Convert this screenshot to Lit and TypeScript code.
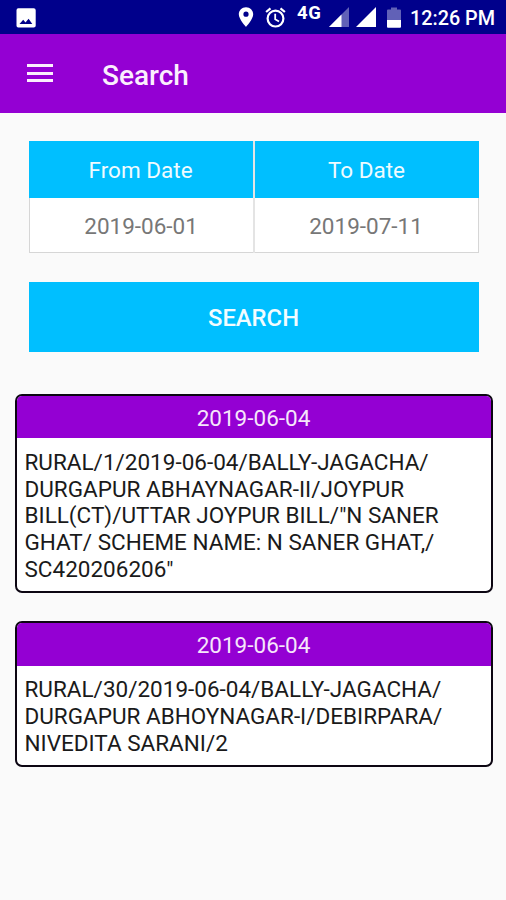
import { LitElement, html, css, svg } from "lit";
import { customElement, property } from "lit/decorators.js";

interface Scheme {
  date: string;
  lines: string[];
}

const schemes: Scheme[] = [
  {
    date: "2019-06-04",
    lines: [
      "RURAL/1/2019-06-04/BALLY-JAGACHA/",
      "DURGAPUR ABHAYNAGAR-II/JOYPUR",
      'BILL(CT)/UTTAR JOYPUR BILL/"N SANER',
      "GHAT/ SCHEME NAME: N SANER GHAT,/",
      'SC420206206"',
    ],
  },
  {
    date: "2019-06-04",
    lines: [
      "RURAL/30/2019-06-04/BALLY-JAGACHA/",
      "DURGAPUR ABHOYNAGAR-I/DEBIRPARA/",
      "NIVEDITA SARANI/2",
    ],
  },
];

@customElement("status-bar")
export class StatusBar extends LitElement {
  static styles = css`
    :host {
      display: flex;
      align-items: center;
      height: 34px;
      background: #00008b;
      color: #fff;
    }
    svg {
      display: block;
      flex: none;
      fill: #fff;
    }
    .picture { margin-left: 16px; margin-top: 1px; }
    .spacer { flex: 1; }
    .pin { margin-right: 11px; }
    .alarm { margin-right: 11px; }
    .network {
      font-size: 18.5px;
      font-weight: 700;
      letter-spacing: 0.6px;
      line-height: 20px;
      margin-bottom: 8px;
      width: 26px;
      margin-right: 6px;
      white-space: nowrap;
    }
    .signal { margin-right: 6.5px; }
    .battery { margin: 0 9px 0 5px; }
    .clock {
      width: 85px;
      margin-right: 11px;
      padding-top: 3px;
      font-size: 19.8px;
      font-weight: 500;
      white-space: nowrap;
    }
  `;

  render() {
    return html`
      <svg class="picture" width="20" height="20" viewBox="0 0 20 20">
        ${svg`<path fill-rule="evenodd" d="M2.3 .3H17.7Q19.7 .3 19.7 2.3V17.7Q19.7 19.5 17.7 19.5H2.3Q.5 19.5 .5 17.7V2.3Q.5 .3 2.3 .3ZM3.5 16H16.3L12.6 10.7L9.5 14.4L7.2 11.8Z"/>`}
      </svg>
      <span class="spacer"></span>
      <svg class="pin" width="16" height="20" viewBox="0 0 16 20">
        ${svg`<path fill-rule="evenodd" d="M8 .2C3.9 .2 .8 3.4 .8 7.3C.8 12.4 8 19.9 8 19.9S15.2 12.4 15.2 7.3C15.2 3.4 12.1 .2 8 .2ZM8 4.6A2.6 2.6 0 1 1 8 9.8A2.6 2.6 0 1 1 8 4.6Z"/>`}
      </svg>
      <svg class="alarm" width="21" height="21" viewBox="0 0 21 21">
        ${svg`<circle cx="10.5" cy="11.6" r="7.9" fill="none" stroke="#fff" stroke-width="2.2"/>
        <path d="M1.1 5L5.5 1.3M19.9 5L15.5 1.3" fill="none" stroke="#fff" stroke-width="2.2"/>
        <path d="M10.2 6.8V12.2L14 14.5" fill="none" stroke="#fff" stroke-width="1.8"/>`}
      </svg>
      <span class="network">4G</span>
      <svg class="signal" width="20" height="20" viewBox="0 0 20 20">
        ${svg`<path d="M0 20L20 0V20Z" opacity=".38"/><path d="M0 20L12.5 7.5V20Z"/>`}
      </svg>
      <svg class="signal" width="20" height="20" viewBox="0 0 20 20">
        ${svg`<path d="M0 20L20 0V20Z"/>`}
      </svg>
      <svg class="battery" width="14" height="21" viewBox="0 0 14 21">
        ${svg`<path d="M0 3.5Q0 2.5 1 2.5H4V.5H10V2.5H13Q14 2.5 14 3.5V13H0Z" opacity=".38"/><path d="M0 13H14V19.7Q14 20.7 13 20.7H1Q0 20.7 0 19.7Z"/>`}
      </svg>
      <span class="clock">12:26 PM</span>
    `;
  }
}

@customElement("scheme-card")
export class SchemeCard extends LitElement {
  @property({ attribute: false }) scheme!: Scheme;

  static styles = css`
    :host {
      display: block;
      box-sizing: border-box;
      border: 2px solid #0c0612;
      border-radius: 7px;
      overflow: hidden;
      background: #fff;
    }
    .date {
      height: 42.3px;
      line-height: 45px;
      background: #9400d3;
      color: #f6e6fb;
      font-size: 22.5px;
      text-align: center;
    }
    .details {
      padding: 10.5px 8px 8.7px;
      color: #1a1a1a;
      font-size: 22.5px;
      line-height: 26.7px;
      white-space: nowrap;
    }
  `;

  render() {
    return html`
      <div class="date">${this.scheme.date}</div>
      <div class="details">
        ${this.scheme.lines.map((line) => html`<div>${line}</div>`)}
      </div>
    `;
  }
}

@customElement("app-root")
export class AppRoot extends LitElement {
  static styles = css`
    :host {
      display: flex;
      flex-direction: column;
      height: 900px;
      overflow: hidden;
      background: #fafafa;
      font-family: Roboto, "Liberation Sans", sans-serif;
    }
    .toolbar {
      display: flex;
      align-items: center;
      height: 78.5px;
      padding-left: 27px;
      background: #9400d3;
      color: #fbeffd;
    }
    .menu {
      display: grid;
      gap: 4.5px;
      width: 26px;
      margin-right: 49px;
    }
    .bar {
      height: 3px;
      background: #fbeffd;
    }
    .title {
      margin: 0;
      padding-top: 4px;
      font-size: 28px;
      font-weight: 500;
    }
    .range {
      display: grid;
      grid-template-columns: 1fr 1fr;
      column-gap: 2px;
      margin: 28.5px 27.5px 0 28.6px;
      background: #e4e4e4;
    }
    .label {
      height: 56.5px;
      line-height: 59px;
      background: #00bfff;
      color: #effbff;
      font-size: 22.5px;
      text-align: center;
    }
    .value {
      height: 54.5px;
      line-height: 57px;
      border: solid #d6d6d6;
      border-width: 0 0 1.5px 1.5px;
      background: #fff;
      color: #777;
      font-size: 22.5px;
      text-align: center;
    }
    .value.end { border-width: 0 1.5px 1.5px 0; }
    .submit {
      display: block;
      height: 70px;
      margin: 28.5px 27.5px 0 28.5px;
      padding: 2px 0 0;
      border: 0;
      background: #00bfff;
      color: #f2fcff;
      font: 500 23.8px Roboto, sans-serif;
    }
    .results {
      display: grid;
      gap: 28.3px;
      padding: 42.5px 13.5px 0 14.5px;
    }
  `;

  render() {
    return html`
      <status-bar></status-bar>
      <header class="toolbar">
        <div class="menu">
          <div class="bar"></div>
          <div class="bar"></div>
          <div class="bar"></div>
        </div>
        <h1 class="title">Search</h1>
      </header>
      <section class="range">
        <div class="label">From Date</div>
        <div class="label">To Date</div>
        <div class="value">2019-06-01</div>
        <div class="value end">2019-07-11</div>
      </section>
      <button class="submit">SEARCH</button>
      <section class="results">
        ${schemes.map((s) => html`<scheme-card .scheme=${s}></scheme-card>`)}
      </section>
    `;
  }
}
